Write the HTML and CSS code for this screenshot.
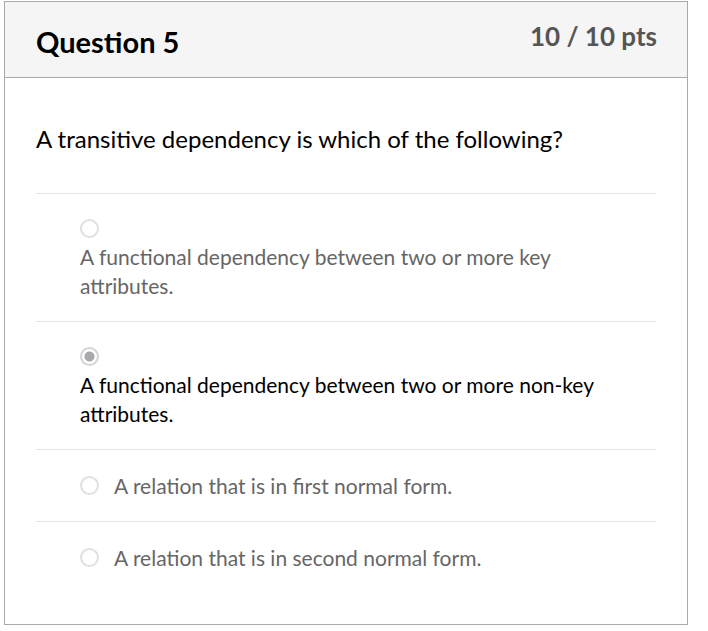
FILE: index.html
```html
<!DOCTYPE html>
<html>
<head>
<meta charset="utf-8">
<link rel="stylesheet" href="styles.css">
</head>
<body>
<div class="question">
  <div class="q-header">
    <h2 class="q-title">Question 5</h2>
    <div class="q-points">10 / 10 pts</div>
  </div>
  <div class="q-body">
    <p class="q-text">A transitive dependency is which of the following?</p>
    <div class="answers">
      <div class="answer stacked">
        <div class="radio-row"><span class="radio"></span></div>
        <div class="answer-text">A functional dependency between two or more key attributes.</div>
      </div>
      <div class="answer stacked selected">
        <div class="radio-row"><span class="radio checked"></span></div>
        <div class="answer-text">A functional dependency between two or more non-key attributes.</div>
      </div>
      <div class="answer inline">
        <span class="radio"></span>
        <div class="answer-text">A relation that is in first normal form.</div>
      </div>
      <div class="answer inline">
        <span class="radio"></span>
        <div class="answer-text">A relation that is in second normal form.</div>
      </div>
    </div>
  </div>
</div>
</body>
</html>
```

FILE: styles.css
```css
html, body {
  margin: 0;
  padding: 0;
  background: #fff;
}
body {
  font-family: Lato, "Liberation Sans", sans-serif;
  padding: 1px 20px 0 4px;
}
.question {
  width: 682px;
  border: 1px solid #aaaaaa;
  box-sizing: content-box;
}
.q-header {
  background: #f5f5f5;
  border-bottom: 1px solid #aaaaaa;
  height: 75px;
  display: flex;
  justify-content: space-between;
  align-items: flex-start;
  padding: 0 30px 0 31px;
}
.q-title {
  margin: 23px 0 0;
  font-size: 29px;
  font-weight: 700;
  color: #000;
  line-height: 34px;
}
.q-points {
  margin-top: 18px;
  font-size: 26px;
  font-weight: 700;
  color: #555;
  line-height: 32px;
}
.q-body {
  padding: 45px 31px 31px 31px;
}
.q-text {
  margin: 0 0 38px;
  font-size: 24px;
  line-height: 32px;
  color: #000;
}
.answers {
  border-top: 1px solid #e6e6e6;
}
.answer {
  border-bottom: 1px solid #e6e6e6;
  padding: 20px 40px 21px 44px;
  color: #666;
  font-size: 21px;
  line-height: 29px;
}
.answer:last-child {
  border-bottom: none;
}
.answer.selected {
  color: #000;
}
.radio-row {
  height: 28px;
  display: flex;
  align-items: center;
}
.answer.inline {
  display: flex;
  align-items: center;
  gap: 15px;
  padding-top: 21px;
}
.radio {
  display: inline-block;
  box-sizing: border-box;
  width: 19px;
  height: 19px;
  border: 2px solid #e0e0e0;
  border-radius: 50%;
  background: #fff;
  flex: none;
}
.radio.checked {
  border: 2px solid #d4d4d6;
  background: radial-gradient(circle, #a8a8ae 0 4.5px, #fff 5.5px);
}
```
